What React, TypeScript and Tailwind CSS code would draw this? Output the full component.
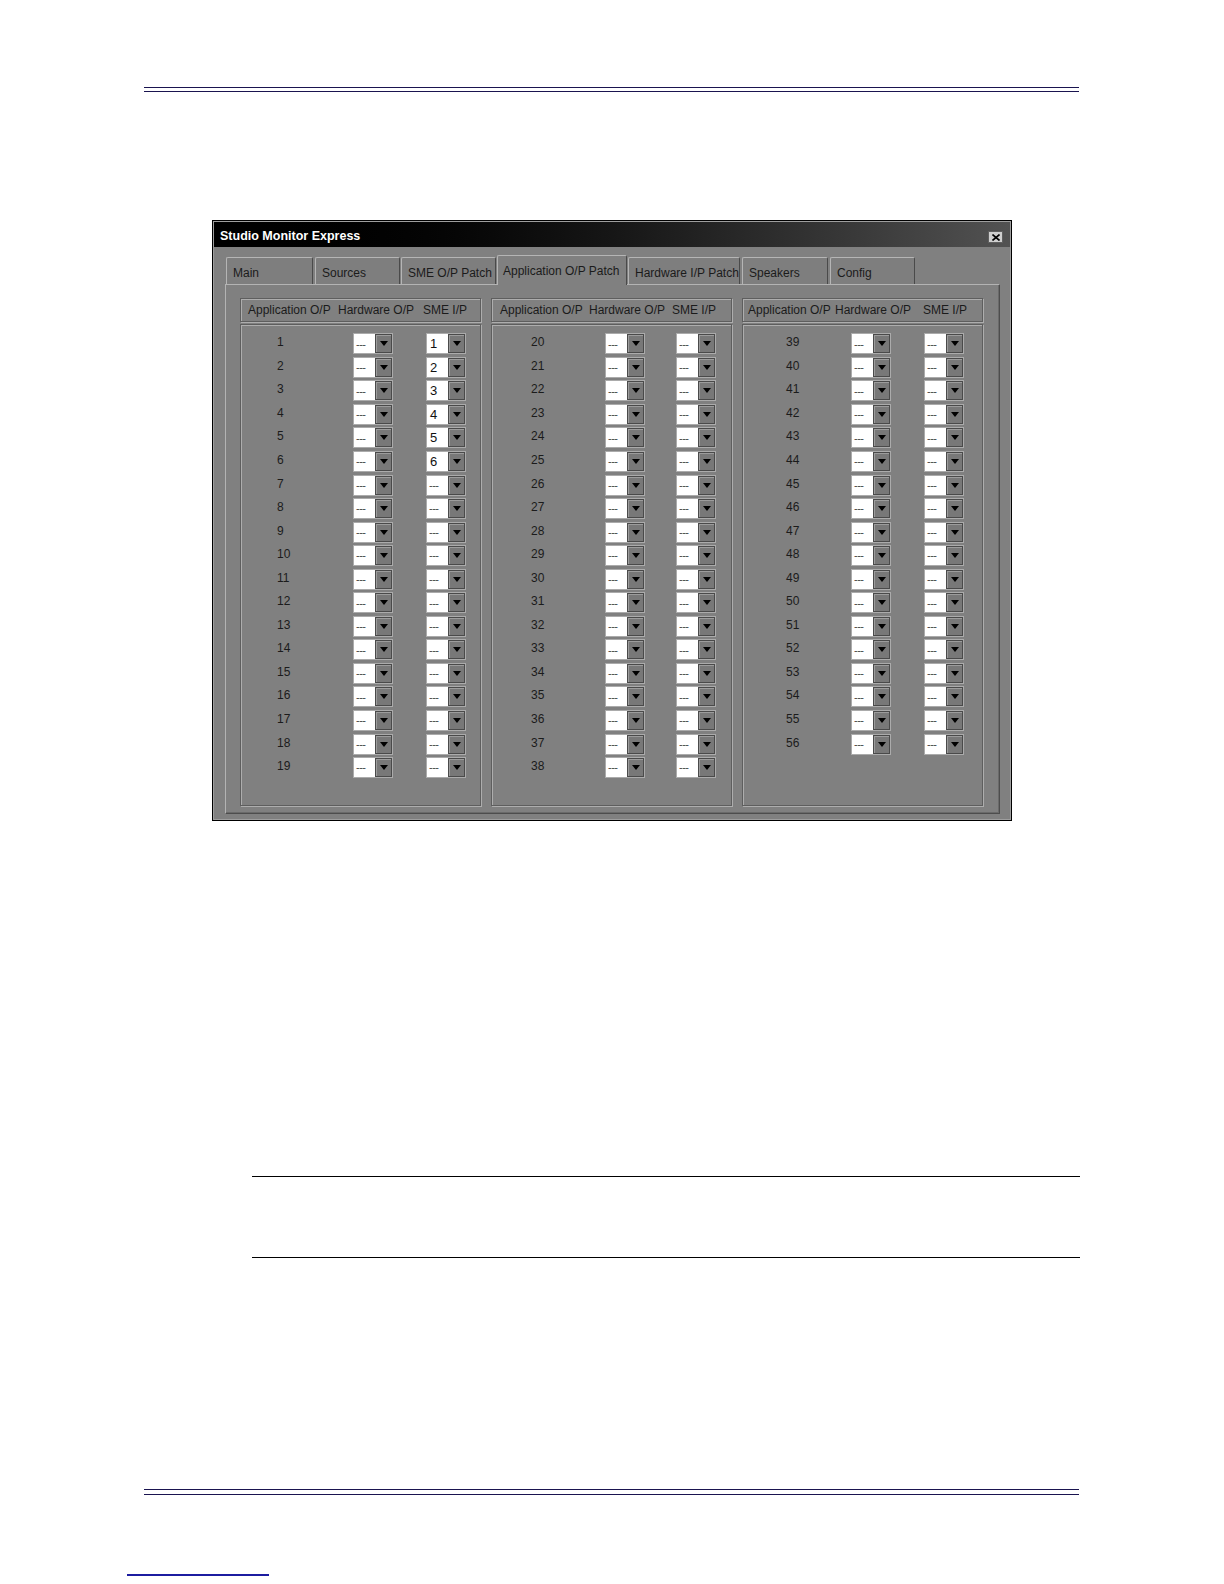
import React from 'react'

type Row = { n: number; hw: string; sme: string }

const makeRows = (from: number, to: number, smeSet = 0): Row[] =>
  Array.from({ length: to - from + 1 }, (_, i) => ({
    n: from + i,
    hw: '---',
    sme: i < smeSet ? String(i + 1) : '---',
  }))

const columns = [
  {
    rows: makeRows(1, 19, 6),
    rowPad: 'pl-[36px]',
    numW: 'w-[76px]',
    gapW: 'w-[33px]',
    hdrPad: 'pl-[7px]',
    hdrA: 'w-[90px]',
    hdrH: 'w-[85px]',
  },
  {
    rows: makeRows(20, 38),
    rowPad: 'pl-[39px]',
    numW: 'w-[74px]',
    gapW: 'w-[31px]',
    hdrPad: 'pl-[8px]',
    hdrA: 'w-[89px]',
    hdrH: 'w-[83px]',
  },
  {
    rows: makeRows(39, 56),
    rowPad: 'pl-[43px]',
    numW: 'w-[65px]',
    gapW: 'w-[33px]',
    hdrPad: 'pl-[5px]',
    hdrA: 'w-[87px]',
    hdrH: 'w-[88px]',
  },
]

const tabs = [
  { label: 'Main', cls: 'w-[87px]' },
  { label: 'Sources', cls: 'w-[85px] ml-[2px]' },
  { label: 'SME O/P Patch', cls: 'w-[95px] ml-px' },
  { label: 'Application O/P Patch', cls: 'w-[130px] ml-px', active: true },
  { label: 'Hardware I/P Patch', cls: 'w-[112px] ml-px' },
  { label: 'Speakers', cls: 'w-[86px] ml-[2px]' },
  { label: 'Config', cls: 'w-[85px] ml-[2px]' },
]

function Combo({ value }: { value: string }) {
  const dash = value === '---'
  return (
    <div className="flex h-[21px] w-[40px] border border-[#ababab] bg-[#8a8a8a]">
      <div
        className={`flex flex-1 items-center bg-white ${
          dash ? 'pl-[2px] text-[11px] tracking-[-0.5px] text-[#444]' : 'pl-[3px] text-[13px] text-[#111]'
        }`}
      >
        {value}
      </div>
      <div className="flex w-[17px] items-center justify-center border border-[#4a4a4a] bg-[#787878] shadow-[inset_1px_1px_0_#9c9c9c]">
        <svg width="8" height="5" viewBox="0 0 8 5">
          <path d="M0 0h8L4 5z" fill="#000" />
        </svg>
      </div>
    </div>
  )
}

function Group({ col }: { col: (typeof columns)[number] }) {
  return (
    <div className="flex w-[241px] flex-col">
      <div
        className={`flex h-[24px] items-center border border-[#5e5e5e] shadow-[inset_1px_1px_0_#adadad,1px_1px_0_#adadad] ${col.hdrPad}`}
      >
        <span className={col.hdrA}>Application O/P</span>
        <span className={col.hdrH}>Hardware O/P</span>
        <span>SME I/P</span>
      </div>
      <div className="mt-[2px] h-[482px] border border-[#5e5e5e] pt-[7px] shadow-[inset_1px_1px_0_#adadad,1px_1px_0_#adadad]">
        {col.rows.map((r) => (
          <div key={r.n} className={`flex h-[23.55px] items-center ${col.rowPad}`}>
            <span className={`${col.numW} pb-[3px]`}>{r.n}</span>
            <Combo value={r.hw} />
            <span className={col.gapW} />
            <Combo value={r.sme} />
          </div>
        ))}
      </div>
    </div>
  )
}

export default function App() {
  return (
    <div className="h-[1584px] w-[1224px] overflow-hidden bg-white pt-[87px] font-['Liberation_Sans',Arial,sans-serif]">
      {/* page header rule */}
      <div className="ml-[144px] h-px w-[935px] bg-[#1a1450]" />
      <div className="ml-[144px] mt-[3px] h-px w-[935px] bg-[#1a1450]" />

      {/* dialog */}
      <div className="ml-[212px] mt-[128px] h-[601px] w-[800px] border border-black bg-[#808080]">
        <div className="flex h-full flex-col border border-[#9e9e9e]">
          <div className="flex h-[25px] items-center justify-between bg-gradient-to-r from-black via-[#161616] to-[#525252] pl-[6px] pr-[7px]">
            <span className="mt-[3px] text-[12.5px] font-bold text-white">Studio Monitor Express</span>
            <div className="mt-[5px] flex h-[12px] w-[15px] items-center justify-center border border-[#606060] bg-[#cfcfcf]">
              <svg width="8" height="7" viewBox="0 0 8 7">
                <path d="M0.5 0.5l7 6M7.5 0.5l-7 6" stroke="#000" strokeWidth="1.6" />
              </svg>
            </div>
          </div>

          <div className="pl-[11px] pt-[8px] text-[12px] text-[#1b1b1b]">
            {/* tabs */}
            <div className="ml-px flex h-[29px] items-end">
              {tabs.map((t) =>
                t.active ? (
                  <div
                    key={t.label}
                    className={`relative z-10 -mb-px flex h-[30px] items-start rounded-t-[2px] border-l border-r border-t border-l-[#b5b5b5] border-r-[#4a4a4a] border-t-[#b5b5b5] bg-[#808080] pl-[5px] pt-[6px] ${t.cls}`}
                  >
                    {t.label}
                  </div>
                ) : (
                  <div
                    key={t.label}
                    className={`flex h-[27px] items-center rounded-t-[2px] border-l border-r border-t border-l-[#b5b5b5] border-r-[#4a4a4a] border-t-[#b5b5b5] bg-[#7e7e7e] pl-[6px] pt-[3px] ${t.cls}`}
                  >
                    {t.label}
                  </div>
                ),
              )}
            </div>

            {/* tab panel */}
            <div className="flex h-[530px] w-[775px] gap-[10px] border border-b-[#4d4d4d] border-l-[#b3b3b3] border-r-[#4d4d4d] border-t-[#b3b3b3] pl-[14px] pt-[13px] shadow-[inset_-1px_-1px_0_#6a6a6a]">
              {columns.map((c, i) => (
                <Group key={i} col={c} />
              ))}
            </div>
          </div>
        </div>
      </div>

      {/* note rules */}
      <div className="ml-[252px] mt-[355px] h-px w-[828px] bg-black" />
      <div className="ml-[252px] mt-[80px] h-px w-[828px] bg-black" />

      {/* page footer rule */}
      <div className="ml-[144px] mt-[231px] h-px w-[935px] bg-[#1a1450]" />
      <div className="ml-[144px] mt-[4px] h-px w-[935px] bg-[#1a1450]" />

      <div className="ml-[127px] mt-[79px] h-[2px] w-[142px] bg-[#1c1ca0]" />
    </div>
  )
}
